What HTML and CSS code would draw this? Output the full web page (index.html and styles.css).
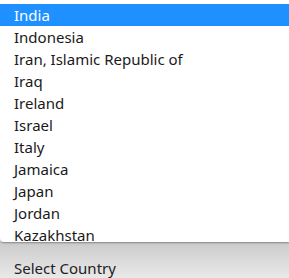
FILE: index.html
```html
<!DOCTYPE html>
<html lang="en">

<head>
    <meta charset="UTF-8" />
    <meta name="viewport" content="width=device-width, initial-scale=1.0" />
    <title>Select Country</title>
    <link rel="stylesheet" href="styles.css">
</head>

<body>
    <div class="picker">
        <ul class="options">
            <li class="selected">India</li>
            <li>Indonesia</li>
            <li>Iran, Islamic Republic of</li>
            <li>Iraq</li>
            <li>Ireland</li>
            <li>Israel</li>
            <li>Italy</li>
            <li>Jamaica</li>
            <li>Japan</li>
            <li>Jordan</li>
            <li>Kazakhstan</li>
        </ul>
        <div class="select">Select Country</div>
    </div>
</body>

</html>
```
FILE: styles.css
```css
* {
    box-sizing: border-box;
}

html,
body {
    margin: 0;
    padding: 0;
    height: 100%;
    font-family: 'Noto Sans', 'Open Sans', sans-serif;
    background-color: #e6e6e6;
    overflow: hidden;
}

.picker {
    display: flex;
    flex-direction: column;
    height: 100%;
}

.options {
    list-style: none;
    margin: 0;
    padding: 4px 0 0;
    height: 242px;
    flex-shrink: 0;
    overflow: hidden;
    background: #fff;
    border-bottom-left-radius: 4px;
    box-shadow: 0 1px 2px rgba(0, 0, 0, 0.35);
    position: relative;
    z-index: 1;
}

.options li {
    height: 22px;
    line-height: 22px;
    padding: 0 14px;
    font-size: 15px;
    color: #1a1a1a;
    white-space: nowrap;
}

.options li.selected {
    background-color: #1e90ff;
    color: #fff;
}

.select {
    flex: 1;
    padding: 17px 14px 0;
    font-size: 15px;
    line-height: 18px;
    color: #222;
    background: linear-gradient(to bottom, #cbcbcb, #e9e9e9);
}
```
